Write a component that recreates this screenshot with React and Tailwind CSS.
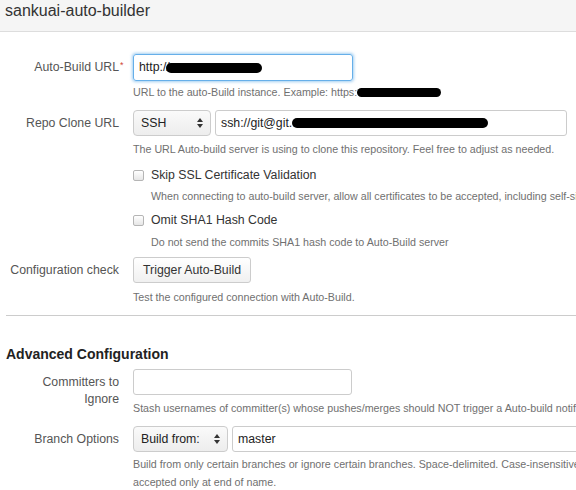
import React from "react";

function Blob({ className }) {
  return <span className={`inline-block bg-black rounded-full blur-[0.6px] ${className}`} />;
}

function Arrows() {
  return (
    <svg width="6" height="10" viewBox="0 0 6 10" className="shrink-0">
      <path d="M3 0 L6 4 L0 4 Z" fill="#333" />
      <path d="M3 10 L6 6 L0 6 Z" fill="#333" />
    </svg>
  );
}

function Row({ label, required, className, children }) {
  return (
    <div className={`flex items-start ${className}`}>
      <div className="w-[119px] shrink-0 text-right text-[12.3px] leading-[17px] text-[#555] pt-[5px]">
        <span className="relative">
          {label}
          {required && (
            <span className="absolute left-full -top-[3px] ml-[1px] text-[9px] text-[#d04437]">*</span>
          )}
        </span>
      </div>
      <div className="ml-[14px]">{children}</div>
    </div>
  );
}

function Help({ className, children }) {
  return (
    <p className={`text-[10.7px] leading-[14px] text-[#707070] whitespace-nowrap ${className}`}>{children}</p>
  );
}

function Check({ label }) {
  return (
    <div className="flex items-center h-[18px]">
      <span className="w-[11px] h-[11px] border border-[#b5b5b5] rounded-[2px] bg-gradient-to-b from-white to-[#e6e6e6]" />
      <span className="ml-[7px] text-[12.3px] text-[#333] whitespace-nowrap">{label}</span>
    </div>
  );
}

export default function App() {
  return (
    <div className="w-[576px] h-[490px] overflow-hidden bg-white font-['Liberation_Sans',Arial,sans-serif]">
      <div className="h-[32px] bg-[#f5f5f5] border-b border-[#dddddd] pl-[5px] pt-[1px]">
        <h1 className="text-[16px] leading-[20px] text-[#333]">sankuai-auto-builder</h1>
      </div>

      <div className="w-[900px]">
        <Row label="Auto-Build URL" required className="mt-[22px]">
          <div className="h-[27px] w-[220px] border border-[#66afe9] rounded-[3px] shadow-[0_0_3px_1px_rgba(102,175,233,0.6)] px-[5px] flex items-center text-[12.3px] text-[#222]">
            http://
            <Blob className="w-[96px] h-[10px] -ml-[4px]" />
          </div>
          <Help className="mt-[4px] flex items-center">
            URL to the auto-Build instance. Example: https:
            <Blob className="w-[84px] h-[9px]" />
          </Help>
        </Row>

        <Row label="Repo Clone URL" className="mt-[11px]">
          <div className="flex">
            <div className="h-[26px] w-[78px] border border-[#cccccc] rounded-[4px] bg-gradient-to-b from-[#fafafa] to-[#ededed] pl-[7px] pr-[7px] flex items-center justify-between text-[12.3px] text-[#222]">
              SSH
              <Arrows />
            </div>
            <div className="ml-[4px] h-[26px] w-[352px] border border-[#cccccc] rounded-[3px] px-[5px] flex items-center text-[12.3px] text-[#222]">
              ssh://git@git.
              <Blob className="w-[196px] h-[10px]" />
            </div>
          </div>
          <Help className="mt-[6px]">
            The URL Auto-build server is using to clone this repository. Feel free to adjust as needed.
          </Help>
        </Row>

        <Row label="" className="mt-[10px]">
          <div>
            <Check label="Skip SSL Certificate Validation" />
            <Help className="mt-[5px] ml-[18px]">
              When connecting to auto-build server, allow all certificates to be accepted, including self-signed certificates.
            </Help>
            <div className="mt-[8px]">
              <Check label="Omit SHA1 Hash Code" />
            </div>
            <Help className="mt-[6px] ml-[18px]">Do not send the commits SHA1 hash code to Auto-Build server</Help>
          </div>
        </Row>

        <Row label="Configuration check" className="mt-[8px]">
          <div className="h-[26px] w-[118px] border border-[#cccccc] rounded-[3px] bg-gradient-to-b from-white to-[#f0f0f0] flex items-center justify-center text-[12.3px] text-[#333]">
            Trigger Auto-Build
          </div>
          <Help className="mt-[7px]">Test the configured connection with Auto-Build.</Help>
        </Row>

        <div className="w-[576px] pl-[6px]">
          <div className="mt-[11px] h-px bg-[#cccccc]" />
          <h2 className="mt-[29px] text-[14px] leading-[18px] font-bold text-[#222]">Advanced Configuration</h2>
        </div>

        <Row label={<>Committers to<br />Ignore</>} className="mt-[6px]">
          <div className="h-[26px] w-[219px] border border-[#cccccc] rounded-[3px]" />
          <Help className="mt-[6px]">
            Stash usernames of committer(s) whose pushes/merges should NOT trigger a Auto-build notification.
          </Help>
        </Row>

        <Row label="Branch Options" className="mt-[11px]">
          <div className="flex">
            <div className="h-[26px] w-[95px] border border-[#cccccc] rounded-[4px] bg-gradient-to-b from-[#fafafa] to-[#ededed] pl-[7px] pr-[7px] flex items-center justify-between text-[12.3px] text-[#222]">
              Build from:
              <Arrows />
            </div>
            <div className="ml-[4px] h-[26px] w-[420px] border border-[#cccccc] rounded-[3px] px-[5px] flex items-center text-[12.3px] text-[#222]">
              master
            </div>
          </div>
          <div className="mt-[3px] text-[10.7px] leading-[18px] text-[#707070] whitespace-nowrap">
            <p>Build from only certain branches or ignore certain branches. Space-delimited. Case-insensitive. Wildcard '*'</p>
            <p>accepted only at end of name.</p>
          </div>
        </Row>
      </div>
    </div>
  );
}
